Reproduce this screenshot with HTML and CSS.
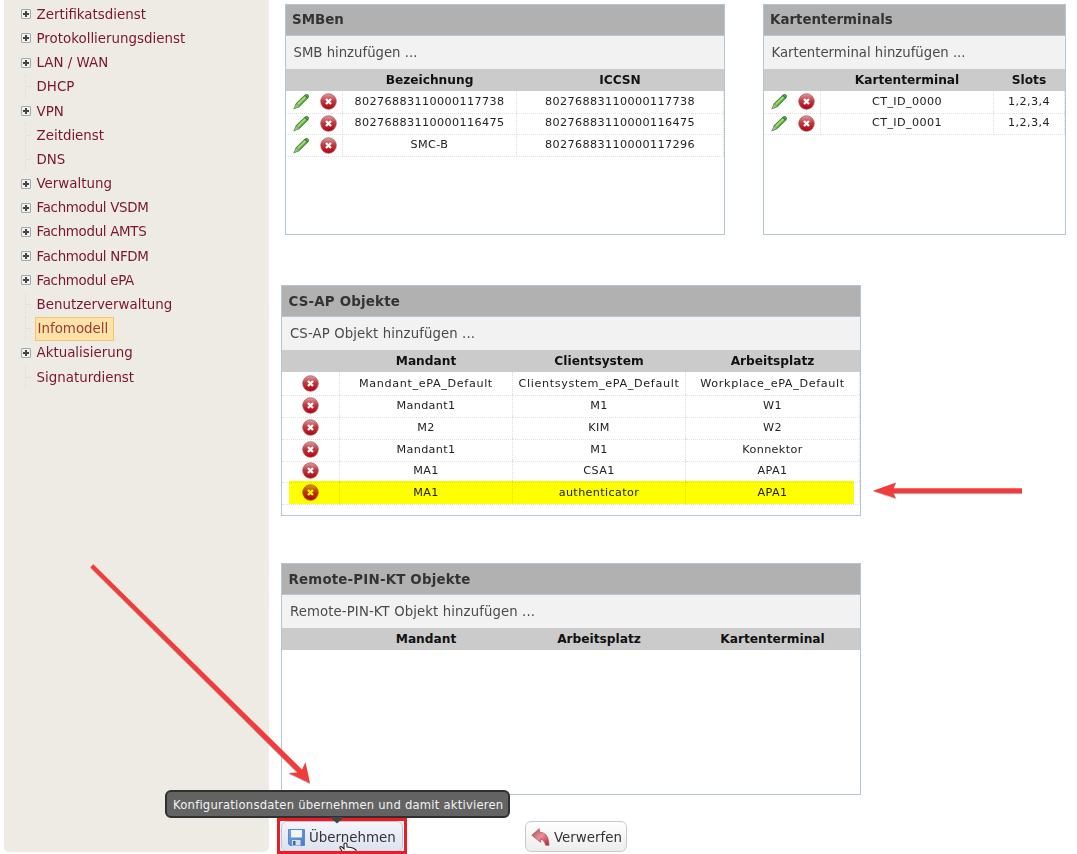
FILE: index.html
```html
<!DOCTYPE html>
<html lang="de">
<head>
<meta charset="utf-8">
<title>Infomodell</title>
<link rel="stylesheet" href="styles.css">
</head>
<body>
<svg class="defs" width="0" height="0" aria-hidden="true">
  <defs>
    <linearGradient id="red" x1="0" y1="0" x2="0" y2="1"><stop offset="0" stop-color="#dba0a0"/><stop offset=".45" stop-color="#c23a42"/><stop offset="1" stop-color="#b3000c"/></linearGradient>
    <linearGradient id="undo" x1="0" y1="0" x2="1" y2="1"><stop offset="0" stop-color="#a04a52"/><stop offset=".5" stop-color="#f08f97"/><stop offset="1" stop-color="#b01e2c"/></linearGradient>
    <linearGradient id="disk" x1="0" y1="0" x2="1" y2="1"><stop offset="0" stop-color="#75a2e2"/><stop offset="1" stop-color="#4a7bc6"/></linearGradient>
    <symbol id="del" viewBox="0 0 17 17"><circle cx="8.5" cy="8.5" r="7.8" fill="url(#red)" stroke="#a85055" stroke-width=".7"/><path d="M6 6l5 5M11 6l-5 5" stroke="#fff" stroke-width="2.3"/></symbol>
    <symbol id="pen" viewBox="0 0 16 16"><path d="M1.2 14.6L3 10.2 11.6 1.8Q13.2.9 14.4 2.4 15 3.5 13.9 4.7L5.5 12.9Z" fill="#69bd4b" stroke="#4c8a40" stroke-width="1"/><path d="M4.5 10.5L12 3.3" stroke="#a4e67e" stroke-width="1.3"/><path d="M1.2 14.6L3 10.6 5.3 12.8Z" fill="#a9b796"/><path d="M11.2 2.2l2.7 2.5" stroke="#386c3d" stroke-width="1"/></symbol>
  </defs>
</svg>
<div class="page">
  <nav class="sidebar">
    <div class="node"><i class="plus"></i><span>Zertifikatsdienst</span></div>
    <div class="node"><i class="plus"></i><span>Protokollierungsdienst</span></div>
    <div class="node"><i class="plus"></i><span>LAN / WAN</span></div>
    <div class="node"><i class="leaf"></i><span>DHCP</span></div>
    <div class="node"><i class="plus"></i><span>VPN</span></div>
    <div class="node"><i class="leaf"></i><span>Zeitdienst</span></div>
    <div class="node"><i class="leaf"></i><span>DNS</span></div>
    <div class="node"><i class="plus"></i><span>Verwaltung</span></div>
    <div class="node module"><i class="plus"></i><span>Fachmodul VSDM</span></div>
    <div class="node module"><i class="plus"></i><span>Fachmodul AMTS</span></div>
    <div class="node module"><i class="plus"></i><span>Fachmodul NFDM</span></div>
    <div class="node module"><i class="plus"></i><span>Fachmodul ePA</span></div>
    <div class="node"><i class="leaf"></i><span>Benutzerverwaltung</span></div>
    <div class="node"><i class="leaf"></i><span class="selected">Infomodell</span></div>
    <div class="node"><i class="plus"></i><span>Aktualisierung</span></div>
    <div class="node"><i class="leaf"></i><span>Signaturdienst</span></div>
  </nav>
  <main class="main">
    <div class="top">
      <section class="panel smb">
        <h2>SMBen</h2>
        <div class="bar">SMB hinzufügen ...</div>
        <div class="row head"><b></b><b>Bezeichnung</b><b>ICCSN</b></div>
        <div class="row"><span class="act"><svg><use href="#pen"/></svg><svg><use href="#del"/></svg></span><span>80276883110000117738</span><span>80276883110000117738</span></div>
        <div class="row"><span class="act"><svg><use href="#pen"/></svg><svg><use href="#del"/></svg></span><span>80276883110000116475</span><span>80276883110000116475</span></div>
        <div class="row"><span class="act"><svg><use href="#pen"/></svg><svg><use href="#del"/></svg></span><span>SMC-B</span><span>80276883110000117296</span></div>
      </section>
      <section class="panel kt">
        <h2>Kartenterminals</h2>
        <div class="bar">Kartenterminal hinzufügen ...</div>
        <div class="row head"><b></b><b>Kartenterminal</b><b>Slots</b></div>
        <div class="row"><span class="act"><svg><use href="#pen"/></svg><svg><use href="#del"/></svg></span><span>CT_ID_0000</span><span>1,2,3,4</span></div>
        <div class="row"><span class="act"><svg><use href="#pen"/></svg><svg><use href="#del"/></svg></span><span>CT_ID_0001</span><span>1,2,3,4</span></div>
      </section>
    </div>
    <section class="panel wide csap">
      <h2>CS-AP Objekte</h2>
      <div class="bar">CS-AP Objekt hinzufügen ...</div>
      <div class="row head"><b></b><b>Mandant</b><b>Clientsystem</b><b>Arbeitsplatz</b></div>
      <div class="row defaults"><span class="act"><svg><use href="#del"/></svg></span><span>Mandant_ePA_Default</span><span>Clientsystem_ePA_Default</span><span>Workplace_ePA_Default</span></div>
      <div class="row"><span class="act"><svg><use href="#del"/></svg></span><span>Mandant1</span><span>M1</span><span>W1</span></div>
      <div class="row"><span class="act"><svg><use href="#del"/></svg></span><span>M2</span><span>KIM</span><span>W2</span></div>
      <div class="row"><span class="act"><svg><use href="#del"/></svg></span><span>Mandant1</span><span>M1</span><span>Konnektor</span></div>
      <div class="row"><span class="act"><svg><use href="#del"/></svg></span><span>MA1</span><span>CSA1</span><span>APA1</span></div>
      <div class="row marked"><span class="act"><svg><use href="#del"/></svg></span><span>MA1</span><span>authenticator</span><span>APA1</span></div>
    </section>
    <section class="panel wide rpin">
      <h2>Remote-PIN-KT Objekte</h2>
      <div class="bar">Remote-PIN-KT Objekt hinzufügen ...</div>
      <div class="row head"><b></b><b>Mandant</b><b>Arbeitsplatz</b><b>Kartenterminal</b></div>
    </section>
    <div class="buttons">
      <button class="btn apply"><svg width="17" height="17" viewBox="0 0 17 17"><path d="M.5.5h16v16H2l-1.500-1.500z" fill="url(#disk)" stroke="#5c88cc"/><path d="M3 1h11v7.500H3z" fill="#f2f6fc"/><path d="M4 11h8.500v5.500H4z" fill="#d7dde6"/><path d="M5 12h2.500v4H5z" fill="#3d68ad"/></svg>Übernehmen</button>
      <button class="btn discard"><svg width="19" height="18" viewBox="0 0 19 18"><path d="M.8 7.300L8.200.8 8.600 4.200Q14.500 4.600 16.400 9.200 18 13 18 17.200H14.600Q13.300 11.700 9.300 10.900L9.800 14.300Z" fill="url(#undo)" stroke="#a65a60" stroke-width=".8"/></svg>Verwerfen</button>
    </div>
  </main>
  <div class="tip">Konfigurationsdaten übernehmen und damit aktivieren</div>
  <div class="frame"></div>
  <svg class="marks" width="1077" height="854" viewBox="0 0 1077 854">
    <path d="M330 817h14l-7 6.500z" fill="#444"/>
    <g class="arrows">
      <path d="M90.300 567.200L93.300 564.200 302 769.500 305.500 762.300 310 783.300 288.500 773 297.500 772.500Z"/>
      <path d="M1022 488.300V493.200H893.500L896 498.300 873 490.800 896 482.500 893.500 488.300Z"/>
    </g>
    <path d="M344 854l-4-6q-.500-2 2-1l2 2v-5q1.500-2 3 0v3l4 .5 3 1 2 1.500v5z" fill="#fff" stroke="#222" stroke-width="1.100"/>
    <path d="M278 852.500h129" stroke="#ed1c24" stroke-width="3"/>
  </svg>
</div>
</body>
</html>
```
FILE: styles.css
```css
* { box-sizing: border-box; }
body { margin: 0; background: #fff; font-family: "DejaVu Sans", Verdana, sans-serif; color: #222; }
.defs { position: absolute; }
.page { position: relative; width: 1077px; height: 854px; overflow: hidden; display: flex; }

.sidebar { flex: none; width: 265px; height: 852px; margin-left: 4px; padding: 2.200px 0 0 17px; background: #eeebe5; border-radius: 0 0 5px 5px; }
.node { display: flex; align-items: center; height: 24.200px; font-size: 13.400px; line-height: 23px; color: #7a1430; white-space: nowrap; }
.module { letter-spacing: -.3px; }
.node i { flex: none; width: 10px; height: 10px; margin-right: 5.500px; }
.plus { border: 1px solid #a1aaab; border-radius: 1px; background: linear-gradient(#444, #444) 50% 50% / 6px 2px no-repeat, linear-gradient(#444, #444) 50% 50% / 2px 6px no-repeat, #f0f1ef; }
.node .leaf { height: 24px; margin-left: 4px; width: 6px; border-left: 1px dotted #dfddd8; background: linear-gradient(#e2e0db, #e2e0db) 0 50% / 6px 1px no-repeat; }
.node .selected { height: 24px; margin-left: -2px; padding: 0 5px 0 2px; line-height: 22px; background: #ffe2a8; border: 1px solid #f3c56e; color: #983c35; }

.main { flex: none; width: 808px; padding: 4px 0 0 12px; }
.top { display: flex; gap: 38px; padding-left: 4px; margin-bottom: 50px; }
.panel { height: 231px; border: 1.500px solid #b4c6d4; background: #fff; }
.smb { width: 440px; }
.kt { width: 303px; }
.wide { width: 580px; }
.csap { margin-bottom: 47px; }
.rpin { height: 232px; }
h2 { height: 31px; margin: 0; padding-left: 6px; border-bottom: 1px solid #b1c6d8; background: #b1b1b1; font-size: 13.400px; line-height: 30px; color: #333; }
.wide h2 { padding-left: 6.500px; letter-spacing: .18px; line-height: 31px; }
.bar { height: 33px; padding-left: 7.500px; background: #f2f2f2; font-size: 13.250px; line-height: 33px; color: #4a4a4a; }
.wide .bar { padding-left: 8px; letter-spacing: .12px; line-height: 34px; }
.row { position: relative; display: grid; height: 21.800px; font-size: 11.200px; letter-spacing: .38px; line-height: 22px; text-align: center; }
.smb .row { grid-template-columns: 57px 174px 1fr; }
.kt .row { grid-template-columns: 57px 173px 1fr; }
.wide .row { grid-template-columns: 58px 173px 173px 1fr; }
.row > span { white-space: nowrap; border-right: 1px dotted #dedede; border-bottom: 1px dotted #e2e2e2; }
.row.defaults { letter-spacing: .64px; }
.row.head { height: 21.500px; background: #cbcbcb; font-size: 12.200px; letter-spacing: 0; color: #111; }
.row.head b { margin-left: -1px; }
.wide .row.head { height: 22.300px; }
.wide .row { line-height: 23px; }
.row .act { display: flex; align-items: center; }
.act svg { width: 17px; height: 17px; }
.smb .act, .kt .act { padding-left: 6.500px; gap: 10.500px; }
.wide .act { justify-content: center; }
.marked::after { content: ""; position: absolute; left: 7px; right: 6px; top: 0; height: 23px; background: #ff0; mix-blend-mode: multiply; }

.buttons { display: flex; gap: 122px; margin-top: 26px; }
.btn { display: flex; align-items: center; height: 31px; padding: 1px 5px 0; border: 1px solid #c9c9c9; border-radius: 6px; background: linear-gradient(#fff, #ededed); color: #333; font: 13.400px "DejaVu Sans", sans-serif; white-space: nowrap; }
.btn svg { flex: none; margin-right: 4px; }
.apply { width: 122px; padding-left: 6px; border-color: #bac4d8; background: linear-gradient(#f4f5fb, #dce2f0); }
.discard { width: 102px; }

.tip { position: absolute; left: 165px; top: 790px; width: 345px; height: 28px; padding-left: 6px; border: 2px solid #303030; border-radius: 6px; background: #636363; color: #f2f2f2; font-size: 11.600px; letter-spacing: .22px; line-height: 26px; white-space: nowrap; }
.frame { position: absolute; left: 277px; top: 818px; width: 130px; height: 36px; border: 3px solid #ed1c24; }
.marks { position: absolute; left: 0; top: 0; pointer-events: none; }
.arrows { fill: #f23c3c; filter: drop-shadow(0 1px .5px #8888); }
```
